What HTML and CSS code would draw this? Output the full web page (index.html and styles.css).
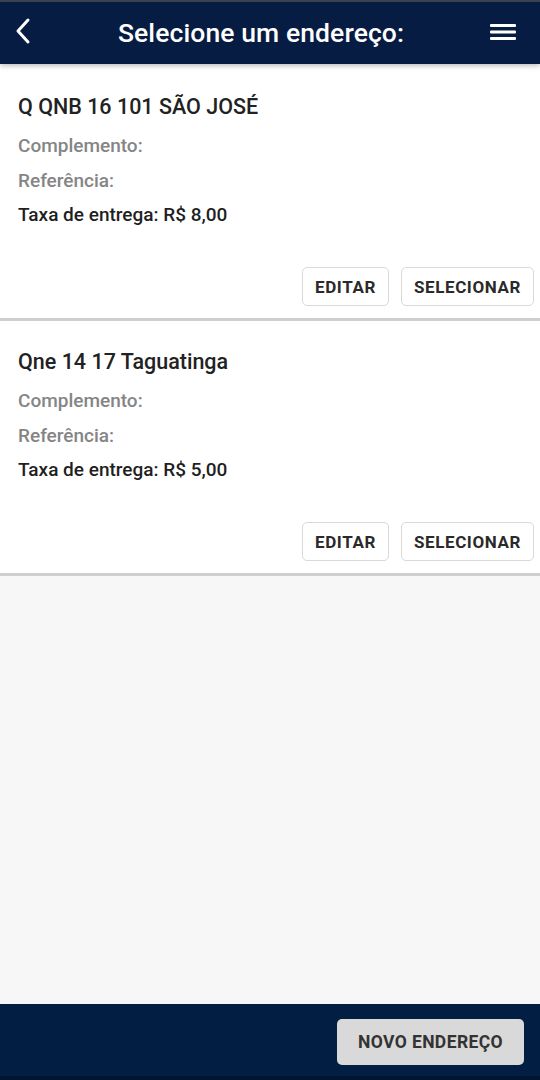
FILE: index.html
```html
<!DOCTYPE html>
<html lang="pt-BR">
<head>
<meta charset="utf-8">
<title>Selecione um endereço</title>
<link rel="stylesheet" href="styles.css">
</head>
<body>
<div class="app">
  <header class="topbar">
    <button class="icon-btn back" aria-label="Voltar">
      <svg width="18" height="28" viewBox="0 0 18 28"><polyline points="14,3 4,14 14,25" fill="none" stroke="#fff" stroke-width="3" stroke-linecap="round" stroke-linejoin="round"/></svg>
    </button>
    <h1 class="title">Selecione um endereço:</h1>
    <button class="icon-btn menu" aria-label="Menu">
      <svg width="26" height="20" viewBox="0 0 26 20"><rect x="0" y="2" width="26" height="3" rx="1" fill="#fff"/><rect x="0" y="8.5" width="26" height="3" rx="1" fill="#fff"/><rect x="0" y="15" width="26" height="3" rx="1" fill="#fff"/></svg>
    </button>
  </header>

  <main class="list">
    <section class="card first">
      <h2 class="addr">Q QNB 16 101 SÃO JOSÉ</h2>
      <p class="muted">Complemento:</p>
      <p class="muted">Referência:</p>
      <p class="fee">Taxa de entrega: R$ 8,00</p>
      <div class="actions">
        <button class="btn">EDITAR</button>
        <button class="btn">SELECIONAR</button>
      </div>
    </section>
    <section class="card">
      <h2 class="addr">Qne 14 17 Taguatinga</h2>
      <p class="muted">Complemento:</p>
      <p class="muted">Referência:</p>
      <p class="fee">Taxa de entrega: R$ 5,00</p>
      <div class="actions">
        <button class="btn">EDITAR</button>
        <button class="btn">SELECIONAR</button>
      </div>
    </section>
  </main>

  <footer class="bottombar">
    <button class="new-btn">NOVO ENDEREÇO</button>
  </footer>
</div>
</body>
</html>
```

FILE: styles.css
```css
* { box-sizing: border-box; }
html, body { margin: 0; padding: 0; }
body {
  font-family: Roboto, "Noto Sans", "Liberation Sans", sans-serif;
  background: #f7f7f7;
  width: 540px;
  height: 1080px;
  overflow: hidden;
}
.app {
  display: flex;
  flex-direction: column;
  height: 1080px;
}
.topbar {
  height: 64px;
  flex: 0 0 64px;
  background: #071c42;
  border-top: 2px solid #3a4252;
  display: flex;
  align-items: center;
  justify-content: space-between;
  padding: 0 24px 0 14px;
  position: relative;
  z-index: 2;
  box-shadow: 0 2px 5px rgba(0,0,0,0.25);
}
.icon-btn {
  background: none;
  border: none;
  padding: 0;
  display: flex;
  align-items: center;
  cursor: pointer;
}
.back { margin-top: -4px; }
.menu { margin-top: -2px; }
.title {
  margin: 0 0 2px 0;
  color: #fff;
  font-size: 26.5px;
  font-weight: 500;
  letter-spacing: 0.1px;
}
.list {
  flex: 1;
  display: flex;
  flex-direction: column;
}
.card {
  background: #fff;
  padding: 28px 6px 12px 18px;
  border-bottom: 3px solid #cfcfcf;
}
.card.first { padding-top: 30px; }
.addr {
  margin: 0 0 8px 0;
  font-size: 21.5px;
  line-height: 26px;
  font-weight: 500;
  color: #222;
}
.muted, .fee {
  margin: 0;
  font-size: 19px;
  line-height: 35px;
  font-weight: 500;
}
.muted { color: #858585; }
.fee { color: #1f1f1f; line-height: 34px; }
.actions {
  display: flex;
  justify-content: flex-end;
  gap: 12px;
  margin-top: 35px;
}
.btn {
  font-family: inherit;
  height: 39px;
  padding: 0 12px;
  background: #fff;
  border: 1px solid #d9d9d9;
  border-radius: 5px;
  font-size: 17px;
  font-weight: 700;
  letter-spacing: 0.6px;
  color: #2a2a2a;
}
.bottombar {
  height: 76px;
  flex: 0 0 76px;
  background: #031e43;
  border-bottom: 4px solid #01152f;
  display: flex;
  align-items: flex-start;
  justify-content: flex-end;
  padding: 15px 16px 0 0;
}
.new-btn {
  font-family: inherit;
  width: 187px;
  height: 46px;
  background: #d9d9d9;
  border: none;
  border-radius: 5px;
  font-size: 17.5px;
  font-weight: 700;
  letter-spacing: 0.4px;
  color: #333;
}
```
